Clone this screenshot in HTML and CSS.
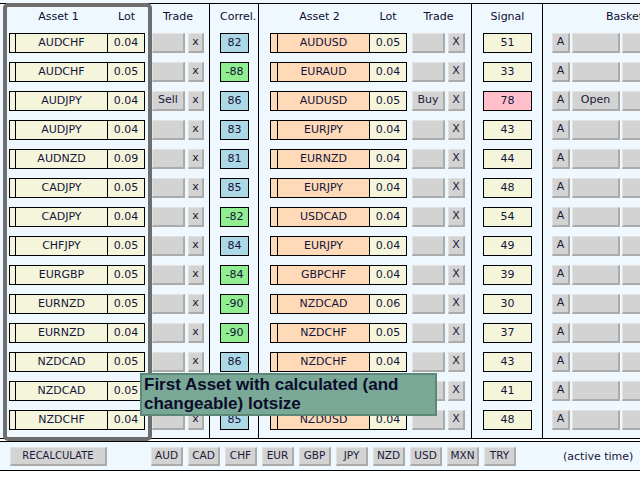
FILE: index.html
```html
<!DOCTYPE html>
<html>
<head>
<meta charset="utf-8">
<link rel="stylesheet" href="styles.css">
</head>
<body>
<div class="page">
  <div class="title"><span>Correlation Dashboard</span></div>
  <div class="main">
    <div class="grp g1">
      <div class="hdr"><span class="h-a">Asset 1</span><span class="h-l">Lot</span><span class="h-t">Trade</span></div>
      <div class="rows">
        <div class="row"><div class="pair p1"><span class="s"></span><span class="n">AUDCHF</span><span class="l">0.04</span></div><span class="btn tb"></span><span class="btn xb">x</span></div>
        <div class="row"><div class="pair p1"><span class="s"></span><span class="n">AUDCHF</span><span class="l">0.05</span></div><span class="btn tb"></span><span class="btn xb">x</span></div>
        <div class="row"><div class="pair p1"><span class="s"></span><span class="n">AUDJPY</span><span class="l">0.04</span></div><span class="btn tb">Sell</span><span class="btn xb">x</span></div>
        <div class="row"><div class="pair p1"><span class="s"></span><span class="n">AUDJPY</span><span class="l">0.04</span></div><span class="btn tb"></span><span class="btn xb">x</span></div>
        <div class="row"><div class="pair p1"><span class="s"></span><span class="n">AUDNZD</span><span class="l">0.09</span></div><span class="btn tb"></span><span class="btn xb">x</span></div>
        <div class="row"><div class="pair p1"><span class="s"></span><span class="n">CADJPY</span><span class="l">0.05</span></div><span class="btn tb"></span><span class="btn xb">x</span></div>
        <div class="row"><div class="pair p1"><span class="s"></span><span class="n">CADJPY</span><span class="l">0.04</span></div><span class="btn tb"></span><span class="btn xb">x</span></div>
        <div class="row"><div class="pair p1"><span class="s"></span><span class="n">CHFJPY</span><span class="l">0.05</span></div><span class="btn tb"></span><span class="btn xb">x</span></div>
        <div class="row"><div class="pair p1"><span class="s"></span><span class="n">EURGBP</span><span class="l">0.05</span></div><span class="btn tb"></span><span class="btn xb">x</span></div>
        <div class="row"><div class="pair p1"><span class="s"></span><span class="n">EURNZD</span><span class="l">0.05</span></div><span class="btn tb"></span><span class="btn xb">x</span></div>
        <div class="row"><div class="pair p1"><span class="s"></span><span class="n">EURNZD</span><span class="l">0.04</span></div><span class="btn tb"></span><span class="btn xb">x</span></div>
        <div class="row"><div class="pair p1"><span class="s"></span><span class="n">NZDCAD</span><span class="l">0.05</span></div><span class="btn tb"></span><span class="btn xb">x</span></div>
        <div class="row"><div class="pair p1"><span class="s"></span><span class="n">NZDCAD</span><span class="l">0.05</span></div><span class="btn tb"></span><span class="btn xb">x</span></div>
        <div class="row"><div class="pair p1"><span class="s"></span><span class="n">NZDCHF</span><span class="l">0.04</span></div><span class="btn tb"></span><span class="btn xb">x</span></div>
      </div>
    </div>
    <div class="grp g2">
      <div class="hdr"><span class="h-c">Correl.</span></div>
      <div class="rows">
        <div class="row"><span class="box cor blue">82</span></div>
        <div class="row"><span class="box cor green">-88</span></div>
        <div class="row"><span class="box cor blue">86</span></div>
        <div class="row"><span class="box cor blue">83</span></div>
        <div class="row"><span class="box cor blue">81</span></div>
        <div class="row"><span class="box cor blue">85</span></div>
        <div class="row"><span class="box cor green">-82</span></div>
        <div class="row"><span class="box cor blue">84</span></div>
        <div class="row"><span class="box cor green">-84</span></div>
        <div class="row"><span class="box cor green">-90</span></div>
        <div class="row"><span class="box cor green">-90</span></div>
        <div class="row"><span class="box cor blue">86</span></div>
        <div class="row"><span class="box cor blue">84</span></div>
        <div class="row"><span class="box cor blue">85</span></div>
      </div>
    </div>
    <div class="grp g3">
      <div class="hdr"><span class="h-a">Asset 2</span><span class="h-l2">Lot</span><span class="h-t2">Trade</span></div>
      <div class="rows">
        <div class="row"><div class="pair p2"><span class="s"></span><span class="n">AUDUSD</span><span class="l">0.05</span></div><span class="btn tb"></span><span class="btn xb2">X</span></div>
        <div class="row"><div class="pair p2"><span class="s"></span><span class="n">EURAUD</span><span class="l">0.04</span></div><span class="btn tb"></span><span class="btn xb2">X</span></div>
        <div class="row"><div class="pair p2"><span class="s"></span><span class="n">AUDUSD</span><span class="l">0.05</span></div><span class="btn tb">Buy</span><span class="btn xb2">X</span></div>
        <div class="row"><div class="pair p2"><span class="s"></span><span class="n">EURJPY</span><span class="l">0.04</span></div><span class="btn tb"></span><span class="btn xb2">X</span></div>
        <div class="row"><div class="pair p2"><span class="s"></span><span class="n">EURNZD</span><span class="l">0.04</span></div><span class="btn tb"></span><span class="btn xb2">X</span></div>
        <div class="row"><div class="pair p2"><span class="s"></span><span class="n">EURJPY</span><span class="l">0.04</span></div><span class="btn tb"></span><span class="btn xb2">X</span></div>
        <div class="row"><div class="pair p2"><span class="s"></span><span class="n">USDCAD</span><span class="l">0.04</span></div><span class="btn tb"></span><span class="btn xb2">X</span></div>
        <div class="row"><div class="pair p2"><span class="s"></span><span class="n">EURJPY</span><span class="l">0.04</span></div><span class="btn tb"></span><span class="btn xb2">X</span></div>
        <div class="row"><div class="pair p2"><span class="s"></span><span class="n">GBPCHF</span><span class="l">0.04</span></div><span class="btn tb"></span><span class="btn xb2">X</span></div>
        <div class="row"><div class="pair p2"><span class="s"></span><span class="n">NZDCAD</span><span class="l">0.06</span></div><span class="btn tb"></span><span class="btn xb2">X</span></div>
        <div class="row"><div class="pair p2"><span class="s"></span><span class="n">NZDCHF</span><span class="l">0.05</span></div><span class="btn tb"></span><span class="btn xb2">X</span></div>
        <div class="row"><div class="pair p2"><span class="s"></span><span class="n">NZDCHF</span><span class="l">0.04</span></div><span class="btn tb"></span><span class="btn xb2">X</span></div>
        <div class="row"><div class="pair p2"><span class="s"></span><span class="n">NZDJPY</span><span class="l">0.04</span></div><span class="btn tb"></span><span class="btn xb2">X</span></div>
        <div class="row"><div class="pair p2"><span class="s"></span><span class="n">NZDUSD</span><span class="l">0.04</span></div><span class="btn tb"></span><span class="btn xb2">X</span></div>
      </div>
    </div>
    <div class="grp g4">
      <div class="hdr"><span class="h-s">Signal</span></div>
      <div class="rows">
        <div class="row"><span class="box sig">51</span></div>
        <div class="row"><span class="box sig">33</span></div>
        <div class="row"><span class="box sig pink">78</span></div>
        <div class="row"><span class="box sig">43</span></div>
        <div class="row"><span class="box sig">44</span></div>
        <div class="row"><span class="box sig">48</span></div>
        <div class="row"><span class="box sig">54</span></div>
        <div class="row"><span class="box sig">49</span></div>
        <div class="row"><span class="box sig">39</span></div>
        <div class="row"><span class="box sig">30</span></div>
        <div class="row"><span class="box sig">37</span></div>
        <div class="row"><span class="box sig">43</span></div>
        <div class="row"><span class="box sig">41</span></div>
        <div class="row"><span class="box sig">48</span></div>
      </div>
    </div>
    <div class="grp g5">
      <div class="hdr"><span class="h-b">Basket</span></div>
      <div class="rows">
        <div class="row"><span class="btn ab">A</span><span class="btn bb"></span><span class="btn bc"></span></div>
        <div class="row"><span class="btn ab">A</span><span class="btn bb"></span><span class="btn bc"></span></div>
        <div class="row"><span class="btn ab">A</span><span class="btn bb">Open</span><span class="btn bc"></span></div>
        <div class="row"><span class="btn ab">A</span><span class="btn bb"></span><span class="btn bc"></span></div>
        <div class="row"><span class="btn ab">A</span><span class="btn bb"></span><span class="btn bc"></span></div>
        <div class="row"><span class="btn ab">A</span><span class="btn bb"></span><span class="btn bc"></span></div>
        <div class="row"><span class="btn ab">A</span><span class="btn bb"></span><span class="btn bc"></span></div>
        <div class="row"><span class="btn ab">A</span><span class="btn bb"></span><span class="btn bc"></span></div>
        <div class="row"><span class="btn ab">A</span><span class="btn bb"></span><span class="btn bc"></span></div>
        <div class="row"><span class="btn ab">A</span><span class="btn bb"></span><span class="btn bc"></span></div>
        <div class="row"><span class="btn ab">A</span><span class="btn bb"></span><span class="btn bc"></span></div>
        <div class="row"><span class="btn ab">A</span><span class="btn bb"></span><span class="btn bc"></span></div>
        <div class="row"><span class="btn ab">A</span><span class="btn bb"></span><span class="btn bc"></span></div>
        <div class="row"><span class="btn ab">A</span><span class="btn bb"></span><span class="btn bc"></span></div>
      </div>
    </div>
  </div>
  <div class="bar">
    <span class="btn recalc">RECALCULATE</span>
    <div class="curs">
      <span class="btn cur">AUD</span><span class="btn cur">CAD</span><span class="btn cur">CHF</span><span class="btn cur">EUR</span><span class="btn cur">GBP</span><span class="btn cur">JPY</span><span class="btn cur">NZD</span><span class="btn cur">USD</span><span class="btn cur">MXN</span><span class="btn cur">TRY</span>
    </div>
    <span class="active">(active time)</span>
  </div>
  <div class="frame"></div>
  <div class="tip">First Asset with calculated (and changeable) lotsize</div>
</div>
</body>
</html>
```

FILE: styles.css
```css
html, body {
  margin: 0;
  padding: 0;
  background: #ffffff;
}
.page {
  position: relative;
  width: 640px;
  height: 480px;
  overflow: hidden;
  background: #ffffff;
  font-family: "DejaVu Sans", Verdana, sans-serif;
  font-size: 11px;
  color: #14143a;
}
.title {
  height: 3px;
  overflow: hidden;
  background: #f0f8ff;
  padding-left: 12px;
}
.title span {
  display: block;
  margin-top: -10px;
  font-size: 11px;
  font-weight: bold;
  line-height: 12px;
  color: #000;
}
.main {
  display: flex;
  height: 434px;
  border-top: 1px solid #000;
  border-bottom: 1px solid #000;
  background: #f0f8ff;
  overflow: hidden;
}
.grp {
  display: flex;
  flex-direction: column;
  flex: none;
}
.g1 { width: 200px; padding-left: 9px; }
.g2 { width: 38px; padding-left: 10px; border-left: 1px solid #000; }
.g3 { width: 201px; padding-left: 11px; border-left: 1px solid #000; }
.g4 { width: 59px; padding-left: 11px; border-left: 1px solid #000; }
.g5 { width: 200px; padding-left: 9px; border-left: 1px solid #000; }
.hdr {
  display: flex;
  height: 29px;
  line-height: 25px;
  white-space: nowrap;
  color: #0c0c30;
}
.hdr span { text-align: center; flex: none; }
.h-a { width: 99px; }
.h-l { width: 37px; }
.h-t { width: 52px; margin-left: 7px; }
.h-l2 { width: 38px; }
.h-t2 { width: 53px; margin-left: 5px; }
.h-c { width: 29px; }
.h-s { width: 49px; }
.h-b { padding-left: 54px; text-align: left !important; }
.rows {
  display: flex;
  flex-direction: column;
  gap: 9px;
}
.row {
  display: flex;
  height: 20px;
  white-space: nowrap;
}
.pair {
  display: flex;
  box-sizing: border-box;
  height: 20px;
  border: 1px solid #000;
  line-height: 18px;
  flex: none;
}
.pair span { display: block; text-align: center; }
.pair .s { width: 5px; }
.pair .n { width: 91px; border-left: 1px solid #000; }
.pair .l { width: 36px; border-left: 1px solid #000; background: #f5f5dc; }
.p1 { width: 136px; background: #f5f5dc; }
.p2 { width: 137px; background: #ffdab9; }
.p2 .s { width: 6px; }
.btn {
  display: block;
  box-sizing: border-box;
  height: 20px;
  background: #d3d3d3;
  border-top: 1px solid #e2e2e2;
  border-left: 1px solid #e2e2e2;
  border-right: 2px solid #ababab;
  border-bottom: 2px solid #ababab;
  text-align: center;
  line-height: 16px;
  color: #1a1a3a;
  flex: none;
}
.tb { width: 33px; margin-left: 7px; }
.g3 .tb { margin-left: 5px; }
.xb { width: 16px; margin-left: 3px; }
.xb2 { width: 17px; margin-left: 3px; }
.ab { width: 18px; }
.bb { width: 48px; margin-left: 2px; }
.bc { width: 60px; margin-left: 2px; }
.box {
  display: block;
  box-sizing: border-box;
  height: 20px;
  border: 1px solid #000;
  text-align: center;
  line-height: 18px;
  flex: none;
}
.cor { width: 29px; }
.sig { width: 49px; background: #f5f5dc; }
.blue { background: #add8e6; }
.green { background: #90ee90; }
.pink { background: #ffc0cb; }
.bar {
  display: flex;
  align-items: flex-start;
  box-sizing: border-box;
  height: 30px;
  margin-top: 2px;
  padding-top: 5px;
  border-top: 1px solid #000;
  border-bottom: 1px solid #000;
  background: #f0f8ff;
  white-space: nowrap;
}
.recalc {
  width: 97px;
  height: 19px;
  margin-left: 10px;
  font-size: 10px;
  line-height: 15px;
}
.curs {
  display: flex;
  gap: 5px;
  margin-left: 44px;
}
.cur {
  width: 32px;
  height: 19px;
  line-height: 15px;
  font-size: 10.5px;
}
.active {
  margin-left: 47px;
  line-height: 19px;
  color: #14143a;
}
.frame {
  position: absolute;
  left: 3px;
  top: 3px;
  width: 141px;
  height: 430px;
  border: 4px solid #6e6e6e;
  border-radius: 5px;
  pointer-events: none;
}
.tip {
  position: absolute;
  left: 140px;
  top: 373px;
  box-sizing: border-box;
  width: 297px;
  height: 43px;
  padding: 0 0 0 2px;
  background: #79a896;
  border: 2px solid #5d8878;
  font-family: "Liberation Sans", Arial, sans-serif;
  font-weight: bold;
  font-size: 17px;
  line-height: 19px;
  color: #0c0c2c;
}
```
